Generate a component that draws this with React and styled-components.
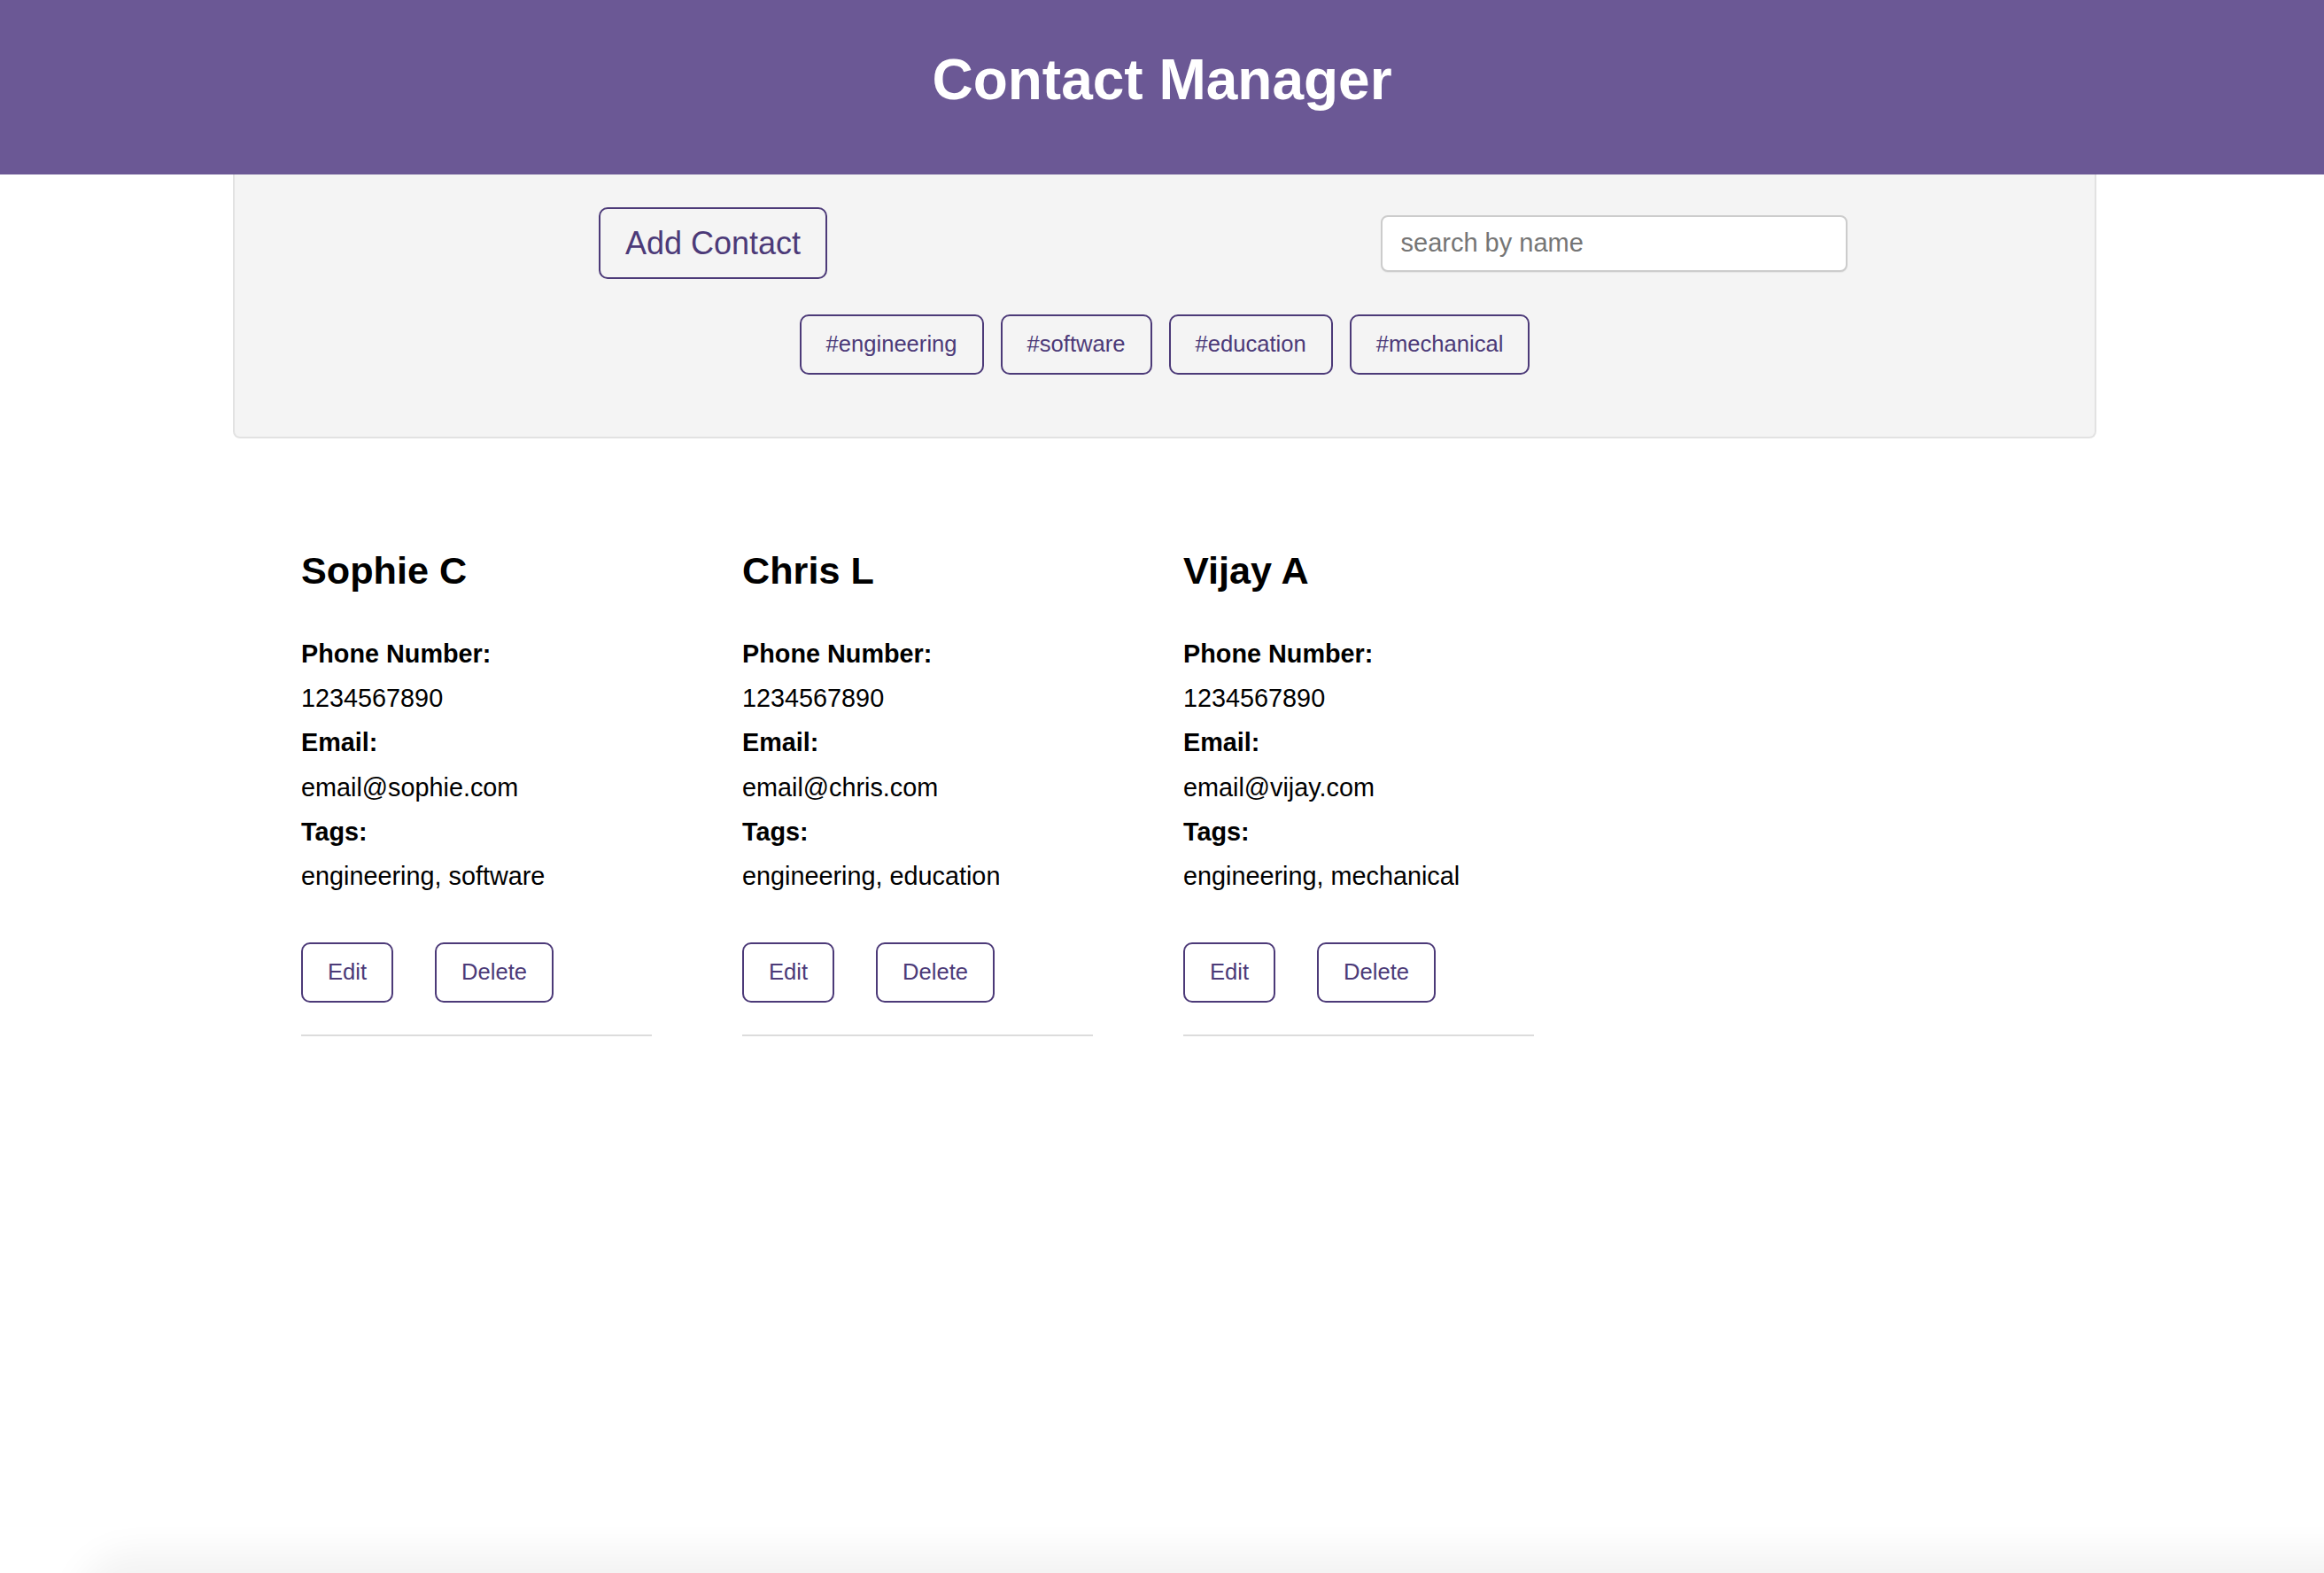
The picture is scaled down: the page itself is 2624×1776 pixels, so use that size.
import React from "react";
import styled, { createGlobalStyle } from "styled-components";

const GlobalStyle = createGlobalStyle`
  html, body {
    margin: 0;
    padding: 0;
    background: #ffffff;
    font-family: "Liberation Sans", Arial, Helvetica, sans-serif;
    color: #000000;
  }
  * { box-sizing: border-box; }
`;

const Page = styled.div`
  min-height: 1776px;
  position: relative;
  overflow: hidden;
`;

const Header = styled.header`
  height: 197px;
  background: #6b5895;
  display: flex;
  align-items: center;
  justify-content: center;
  padding-bottom: 18px;
`;

const Title = styled.h1`
  margin: 0;
  color: #ffffff;
  font-size: 64px;
  font-weight: 700;
  line-height: 74px;
`;

const Panel = styled.section`
  width: 2104px;
  margin: 0 0 0 263px;
  background: #f4f4f4;
  border: 2px solid #e2e2e2;
  border-top: none;
  border-radius: 0 0 8px 8px;
  padding: 37px 0 70px;
  display: flex;
  flex-direction: column;
  gap: 40px;
`;

const TopRow = styled.div`
  display: grid;
  grid-template-columns: 1fr 1fr;
  align-items: center;
  justify-items: center;
  padding: 0 30px;
  height: 81px;
`;

const OutlineButton = styled.button`
  font-family: inherit;
  background: transparent;
  color: #4c3a78;
  border: 2px solid #4c3a78;
  border-radius: 10px;
  cursor: pointer;
  font-size: ${(p) => (p.$large ? "36px" : "25.6px")};
  height: ${(p) => (p.$large ? "81px" : "68px")};
  padding: 0 28px;
  line-height: 1;
  white-space: nowrap;
`;

const SearchInput = styled.input`
  width: 527px;
  height: 64px;
  margin-right: 6px;
  border: 2px solid #cccccc;
  border-radius: 8px;
  background: #ffffff;
  padding: 0 21px;
  font-family: inherit;
  font-size: 29px;
  color: #333;
  outline: none;
  box-shadow: 0 1px 1px rgba(0, 0, 0, 0.06);
  &::placeholder {
    color: #757575;
  }
`;

const TagRow = styled.div`
  display: flex;
  justify-content: center;
  gap: 19px;
`;

const CardList = styled.main`
  margin: 124px 0 0 340px;
  display: flex;
  gap: 102px;
`;

const Card = styled.article`
  width: 396px;
  display: flex;
  flex-direction: column;
  border-bottom: 2px solid #dcdcdc;
  padding-bottom: 36px;
`;

const Name = styled.h2`
  margin: 0;
  font-size: 43.2px;
  font-weight: 700;
  line-height: 50px;
`;

const Info = styled.div`
  margin-top: 44px;
  font-size: 28.8px;
  line-height: 50.2px;
`;

const Label = styled.div`
  font-weight: 700;
`;

const Value = styled.div`
  font-weight: 400;
`;

const Actions = styled.div`
  margin-top: 50px;
  display: flex;
  gap: 47px;
`;

const BottomSheet = styled.div`
  position: fixed;
  left: 110px;
  right: -200px;
  bottom: -40px;
  height: 40px;
  background: #f3f3f3;
  border-radius: 60px 0 0 0;
  box-shadow: 0 0 40px 24px #f3f3f3;
`;

const tags = ["engineering", "software", "education", "mechanical"];

const contacts = [
  { name: "Sophie C", phone: "1234567890", email: "email@sophie.com", tags: ["engineering", "software"] },
  { name: "Chris L", phone: "1234567890", email: "email@chris.com", tags: ["engineering", "education"] },
  { name: "Vijay A", phone: "1234567890", email: "email@vijay.com", tags: ["engineering", "mechanical"] },
];

export default function App() {
  return (
    <Page>
      <GlobalStyle />
      <Header>
        <Title>Contact Manager</Title>
      </Header>
      <Panel>
        <TopRow>
          <OutlineButton $large>Add Contact</OutlineButton>
          <SearchInput placeholder="search by name" />
        </TopRow>
        <TagRow>
          {tags.map((t) => (
            <OutlineButton key={t}>#{t}</OutlineButton>
          ))}
        </TagRow>
      </Panel>
      <CardList>
        {contacts.map((c) => (
          <Card key={c.name}>
            <Name>{c.name}</Name>
            <Info>
              <Label>Phone Number:</Label>
              <Value>{c.phone}</Value>
              <Label>Email:</Label>
              <Value>{c.email}</Value>
              <Label>Tags:</Label>
              <Value>{c.tags.join(", ")}</Value>
            </Info>
            <Actions>
              <OutlineButton>Edit</OutlineButton>
              <OutlineButton>Delete</OutlineButton>
            </Actions>
          </Card>
        ))}
      </CardList>
      <BottomSheet />
    </Page>
  );
}
